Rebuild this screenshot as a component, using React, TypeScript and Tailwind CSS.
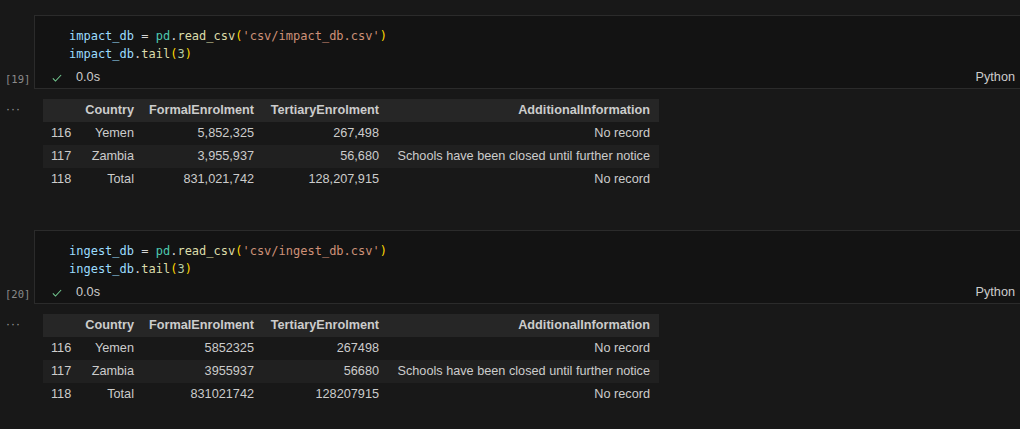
import React from "react";

const mono = { fontFamily: '"DejaVu Sans Mono", "Liberation Mono", monospace' };
const sans = { fontFamily: '"Liberation Sans", Arial, sans-serif' };

type Row = [string, string, string, string, string];

function Code({ name, file }: { name: string; file: string }) {
  return (
    <div className="pl-[34px] pt-[11px] text-[12px] leading-[18px]" style={mono}>
      <div>
        <span className="text-[#9cdcfe]">{name}</span>
        <span className="text-[#d4d4d4]"> = </span>
        <span className="text-[#4ec9b0]">pd</span>
        <span className="text-[#d4d4d4]">.</span>
        <span className="text-[#dcdcaa]">read_csv</span>
        <span className="text-[#ffd700]">(</span>
        <span className="text-[#ce9178]">'{file}'</span>
        <span className="text-[#ffd700]">)</span>
      </div>
      <div>
        <span className="text-[#9cdcfe]">{name}</span>
        <span className="text-[#d4d4d4]">.</span>
        <span className="text-[#dcdcaa]">tail</span>
        <span className="text-[#ffd700]">(</span>
        <span className="text-[#b5cea8]">3</span>
        <span className="text-[#ffd700]">)</span>
      </div>
    </div>
  );
}

function Cell({ count, name, file, rows }: { count: string; name: string; file: string; rows: Row[] }) {
  return (
    <div>
      <div className="flex">
        <div className="w-[34px] shrink-0 flex flex-col justify-end pb-[3px]">
          <span className="text-[10.5px] leading-[14px] text-[#8b8b8b] pl-[5px]" style={mono}>
            [{count}]
          </span>
        </div>
        <div className="flex-1 h-[74px] border border-r-0 border-[#2b2b2b] bg-[#131313] flex flex-col">
          <Code name={name} file={file} />
          <div className="mt-auto h-[24px] flex items-center pt-[4px]">
            <svg width="12" height="12" viewBox="0 0 16 16" className="ml-[16px]">
              <path d="M2.5 8.5 L6 12 L13.5 4" fill="none" stroke="#73c991" strokeWidth="1.4" />
            </svg>
            <span className="ml-[13px] text-[12.7px] text-[#cccccc]" style={sans}>0.0s</span>
            <span className="ml-auto mr-[5px] text-[12.7px] text-[#cccccc]" style={sans}>Python</span>
          </div>
        </div>
      </div>
      <div className="flex mt-[10px]">
        <div className="w-[43px] shrink-0 text-[#9a9a9a] text-[12px] leading-[10px] pl-[6px] pt-[5px] tracking-[1px]" style={sans}>
          ···
        </div>
        <table className="text-[12.7px] text-[#cccccc] border-collapse" style={sans}>
          <thead>
            <tr className="bg-[#262626] h-[23px] font-bold">
              <th className="w-[33px]"></th>
              <th className="w-[66px] text-right pr-[8px]">Country</th>
              <th className="w-[120px] text-right pr-[8px]">FormalEnrolment</th>
              <th className="w-[125px] text-right pr-[8px]">TertiaryEnrolment</th>
              <th className="w-[272px] text-right pr-[9px]">AdditionalInformation</th>
            </tr>
          </thead>
          <tbody>
            {rows.map((r, i) => (
              <tr key={i} className={`h-[23px] ${i === 1 ? "bg-[#202020]" : ""}`}>
                <td className="text-left pl-[8px]">{r[0]}</td>
                <td className="text-right pr-[8px]">{r[1]}</td>
                <td className="text-right pr-[8px]">{r[2]}</td>
                <td className="text-right pr-[8px]">{r[3]}</td>
                <td className="text-right pr-[9px]">{r[4]}</td>
              </tr>
            ))}
          </tbody>
        </table>
      </div>
    </div>
  );
}

export default function App() {
  const rows1: Row[] = [
    ["116", "Yemen", "5,852,325", "267,498", "No record"],
    ["117", "Zambia", "3,955,937", "56,680", "Schools have been closed until further notice"],
    ["118", "Total", "831,021,742", "128,207,915", "No record"],
  ];
  const rows2: Row[] = [
    ["116", "Yemen", "5852325", "267498", "No record"],
    ["117", "Zambia", "3955937", "56680", "Schools have been closed until further notice"],
    ["118", "Total", "831021742", "128207915", "No record"],
  ];
  return (
    <div className="w-[1020px] h-[429px] bg-[#181818] pt-[15px] overflow-hidden flex flex-col gap-[39px]">
      <Cell count="19" name="impact_db" file="csv/impact_db.csv" rows={rows1} />
      <Cell count="20" name="ingest_db" file="csv/ingest_db.csv" rows={rows2} />
    </div>
  );
}
